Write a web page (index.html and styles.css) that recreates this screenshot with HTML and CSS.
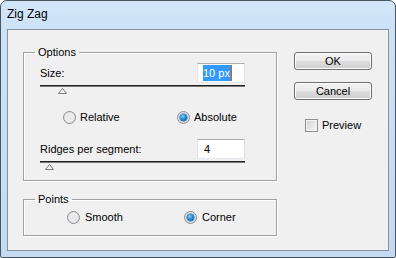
FILE: index.html
```html
<!DOCTYPE html>
<html>
<head>
<meta charset="utf-8">
<link rel="stylesheet" href="styles.css">
</head>
<body>
<div class="window">
  <div class="titlebar">Zig Zag</div>
  <div class="client">
    <div class="left">
      <fieldset class="group">
        <legend>Options</legend>
        <div class="group-body options">
          <div class="field-row">
            <span class="label">Size:</span>
            <span class="textbox"><span class="sel">10 px</span><span class="caret"></span></span>
          </div>
          <div class="slider"><svg class="thumb thumb-size" width="9" height="6" viewBox="0 0 9 6"><path d="M0.5 5.5 L4.5 0.5 L8.5 5.5 Z" fill="#f4f4f4" stroke="#7a7a7a"/></svg></div>
          <div class="radio-row opts">
            <span class="radio-item first"><span class="radio"></span>Relative</span>
            <span class="radio-item"><span class="radio on"></span>Absolute</span>
          </div>
          <div class="field-row ridges">
            <span class="label">Ridges per segment:</span>
            <span class="textbox plain">4</span>
          </div>
          <div class="slider"><svg class="thumb thumb-ridges" width="9" height="6" viewBox="0 0 9 6"><path d="M0.5 5.5 L4.5 0.5 L8.5 5.5 Z" fill="#f4f4f4" stroke="#7a7a7a"/></svg></div>
        </div>
      </fieldset>
      <fieldset class="group">
        <legend>Points</legend>
        <div class="group-body points">
          <div class="radio-row pts">
            <span class="radio-item first"><span class="radio"></span>Smooth</span>
            <span class="radio-item"><span class="radio on"></span>Corner</span>
          </div>
        </div>
      </fieldset>
    </div>
    <div class="right">
      <button class="btn">OK</button>
      <button class="btn cancel">Cancel</button>
      <label class="check"><span class="box"></span>Preview</label>
    </div>
  </div>
</div>
</body>
</html>
```
FILE: styles.css
```css
html, body {
  margin: 0;
  padding: 0;
  background: #ffffff;
}
.window {
  width: 396px;
  height: 258px;
  box-sizing: border-box;
  border: 1px solid #4a5562;
  border-radius: 7px 7px 2px 2px;
  background: linear-gradient(#d3e6f9 0px, #cde2f7 28px, #c3daf1 100%);
  display: flex;
  flex-direction: column;
  font-family: "Liberation Sans", Arial, sans-serif;
  overflow: hidden;
}
.titlebar {
  height: 28px;
  box-sizing: border-box;
  padding: 6px 0 0 6px;
  font-size: 12px;
  line-height: 15px;
  color: #000;
}
.client {
  margin: 0 6px 6px 6px;
  flex: 1;
  border: 1px solid #8592a0;
  background: #f0f0f0;
  display: flex;
  padding: 16px 16px 0 15px;
  font-size: 11px;
  color: #000;
}
.left {
  width: 254px;
  display: flex;
  flex-direction: column;
  gap: 12px;
}
.group {
  margin: 0;
  padding: 0;
  border: 1px solid #a0a0a0;
  box-shadow: inset 1px 1px 0 #ffffff, 1px 1px 0 #ffffff;
  min-width: 0;
}
.group legend {
  margin-left: 11px;
  padding: 0 3px;
  font-size: 11px;
  line-height: 13px;
}
.group-body.options {
  padding: 0 31px 8px 16px;
}
.field-row {
  margin-top: 4px;
  height: 20px;
  display: flex;
  align-items: center;
  justify-content: space-between;
}
.field-row.ridges {
  margin-top: 15px;
}
.textbox {
  width: 48px;
  height: 20px;
  box-sizing: border-box;
  border: 1px solid #abadb3;
  border-color: #abadb3 #dbdfe6 #e3e9ef #e2e3ea;
  background: #fff;
  display: flex;
  align-items: center;
  padding-left: 5px;
  font-size: 11px;
}
.textbox.plain {
  padding-left: 6px;
}
.sel {
  background: #3399ff;
  color: #fff;
  line-height: 16px;
  padding-right: 1px;
}
.caret {
  width: 1px;
  height: 16px;
  background: #cc6600;
}
.slider {
  margin-top: 2px;
  height: 10px;
  border-top: 1px solid #202020;
  box-shadow: inset 0 1px 0 #7a7a7a;
}
.thumb {
  display: block;
  margin-top: 2px;
}
.thumb-size {
  margin-left: 18px;
}
.thumb-ridges {
  margin-left: 5px;
}
.radio-row {
  display: flex;
  align-items: center;
  height: 13px;
}
.radio-row.opts {
  margin-top: 15px;
  padding-left: 23px;
}
.radio-row.opts .first {
  width: 114px;
}
.radio-item {
  display: flex;
  align-items: center;
  gap: 4px;
  line-height: 13px;
}
.group-body.points {
  padding: 5px 16px 11px 43px;
}
.radio-row.pts .first {
  width: 117px;
}
.radio-row.pts .radio-item {
  gap: 5px;
}
.radio {
  width: 13px;
  height: 13px;
  box-sizing: border-box;
  border-radius: 50%;
  border: 1px solid #8a8f94;
  background: radial-gradient(circle at 50% 50%, #e6e6e6 0, #ececec 45%, #f7f7f7 75%, #ffffff 100%);
  box-shadow: inset 0 0 0 1px #dcdcdc;
  position: relative;
  flex: none;
}
.radio.on::after {
  content: "";
  position: absolute;
  left: 2px;
  top: 2px;
  width: 7px;
  height: 7px;
  border-radius: 50%;
  background: radial-gradient(circle at 40% 35%, #8cd6fb 0, #2a8fdc 40%, #0a4f94 100%);
  box-shadow: 0 0 0 0.5px #1b5a95;
}
.right {
  width: 78px;
  margin-left: 17px;
  padding-top: 6px;
  display: flex;
  flex-direction: column;
  align-items: stretch;
}
.btn {
  height: 18px;
  box-sizing: border-box;
  border: 1px solid #707070;
  border-radius: 3px;
  background: linear-gradient(#f2f2f2 0%, #ebebeb 50%, #dddddd 50%, #cfcfcf 100%);
  box-shadow: inset 0 0 0 1px #fcfcfc;
  font-family: "Liberation Sans", Arial, sans-serif;
  font-size: 11px;
  line-height: 14px;
  color: #000;
  padding: 0;
  margin: 0;
}
.btn.cancel {
  margin-top: 12px;
}
.check {
  margin-top: 19px;
  margin-left: 11px;
  display: flex;
  align-items: center;
  gap: 4px;
  line-height: 13px;
}
.box {
  width: 13px;
  height: 13px;
  box-sizing: border-box;
  border: 1px solid #8e8f8f;
  background: linear-gradient(135deg, #d0d0d0 0%, #e8e8e8 60%, #f8f8f8 100%);
  box-shadow: inset 0 0 0 1px #f4f4f4;
}
```
